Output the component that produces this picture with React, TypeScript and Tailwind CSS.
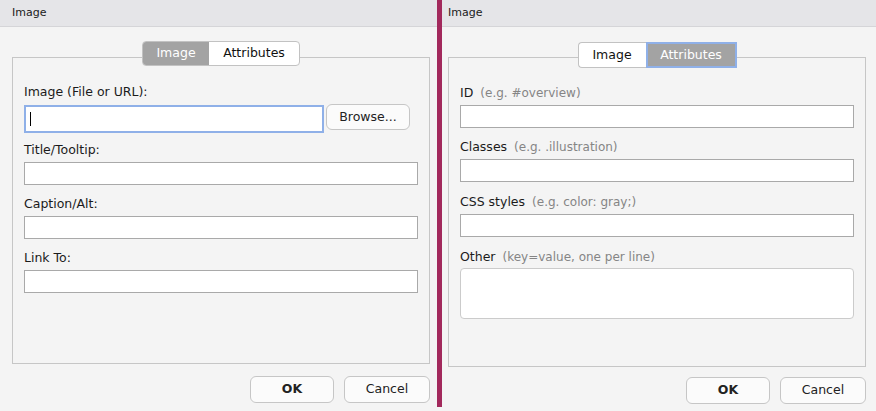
import React from "react";

const font = { fontFamily: '"DejaVu Sans", Verdana, sans-serif' };

function Label({ text, hint }: { text: string; hint?: string }) {
  return (
    <div className="h-[16px] flex items-center text-[12.5px] leading-[16px] text-[#1b1b1b] whitespace-nowrap">
      <span>{text}</span>
      {hint && <span className="ml-[7px] text-[12px] text-[#858585]">{hint}</span>}
    </div>
  );
}

function Input() {
  return <div className="mt-[4px] h-[23px] w-full border border-[#a9a9a9] bg-white" />;
}

function Tabs({ active }: { active: "image" | "attrs" }) {
  return (
    <div className="relative z-10 flex justify-center">
      {active === "image" ? (
        <div className="flex h-[25px] rounded-[4px] border border-[#c2c2c2] bg-white overflow-hidden text-[12.5px]">
          <div className="w-[66px] flex items-center justify-center bg-[#a3a3a3] text-white">Image</div>
          <div className="w-[90px] flex items-center justify-center text-[#111]">Attributes</div>
        </div>
      ) : (
        <div className="flex h-[26px] mt-[1px] text-[12.5px]">
          <div className="w-[68px] flex items-center justify-center bg-white border border-[#c2c2c2] border-r-0 rounded-l-[4px] text-[#111]">
            Image
          </div>
          <div className="w-[91px] flex items-center justify-center bg-[#a3a3a3] border-2 border-[#8fb0e8] text-white">
            Attributes
          </div>
        </div>
      )}
    </div>
  );
}

function Buttons() {
  return (
    <div className="flex justify-end gap-[10px]">
      <div className="w-[84px] h-[27px] flex items-center justify-center rounded-[6px] border border-[#c6c6c6] bg-[#fbfbfb] text-[12.5px] font-bold text-[#222]">
        OK
      </div>
      <div className="w-[86px] h-[27px] flex items-center justify-center rounded-[6px] border border-[#c6c6c6] bg-[#fbfbfb] text-[12.5px] text-[#222]">
        Cancel
      </div>
    </div>
  );
}

function TitleBar() {
  return (
    <div className="h-[27px] flex items-center pl-[12px] bg-[#e5e5e8] border-b border-[#d5d5d8] text-[11px] text-[#1b1b1b]">
      Image
    </div>
  );
}

function LeftPanel() {
  return (
    <div className="w-[436px] shrink-0 h-full bg-[#f4f4f4] overflow-hidden">
      <TitleBar />
      <div className="ml-[12px] w-[418px] mt-[14px]">
        <Tabs active="image" />
        <div className="-mt-[9px] h-[307px] border border-[#c6c6c6] px-[11px] pt-[26px]">
          <Label text="Image (File or URL):" />
          <div className="mt-[5px] flex items-start gap-[2px]">
            <div className="h-[28px] w-[300px] border-2 border-[#8fb0e8] bg-white flex items-center">
              <span className="ml-[4px] w-px h-[14px] bg-black" />
            </div>
            <div className="-mt-[1px] h-[26px] w-[84px] flex items-center justify-center rounded-[6px] border border-[#c6c6c6] bg-[#fbfbfb] text-[12.5px] text-[#222]">
              Browse...
            </div>
          </div>
          <div className="mt-[9px]">
            <Label text="Title/Tooltip:" />
            <Input />
          </div>
          <div className="mt-[11px]">
            <Label text="Caption/Alt:" />
            <Input />
          </div>
          <div className="mt-[11px]">
            <Label text="Link To:" />
            <Input />
          </div>
        </div>
        <div className="mt-[12px]">
          <Buttons />
        </div>
      </div>
    </div>
  );
}

function RightPanel() {
  return (
    <div className="w-[440px] shrink-0 h-full bg-[#f4f4f4] overflow-hidden">
      <TitleBar />
      <div className="ml-[12px] w-[418px] mt-[14px]">
        <Tabs active="attrs" />
        <div className="-mt-[11px] h-[310px] border border-[#c6c6c6] px-[11px] pt-[27px]">
          <Label text="ID" hint="(e.g. #overview)" />
          <Input />
          <div className="mt-[11px]">
            <Label text="Classes" hint="(e.g. .illustration)" />
            <Input />
          </div>
          <div className="mt-[12px]">
            <Label text="CSS styles" hint="(e.g. color: gray;)" />
            <Input />
          </div>
          <div className="mt-[12px]">
            <Label text="Other" hint="(key=value, one per line)" />
            <div className="mt-[3px] h-[51px] w-full rounded-[4px] border border-[#cbcbcb] bg-white" />
          </div>
        </div>
        <div className="mt-[10px]">
          <Buttons />
        </div>
      </div>
    </div>
  );
}

export default function App() {
  return (
    <div className="relative w-[876px] h-[411px] flex bg-[#f4f4f4] overflow-hidden" style={font}>
      <LeftPanel />
      <RightPanel />
      <div className="absolute left-[437px] top-0 w-[5px] h-[407px] bg-[#a2295c]" />
    </div>
  );
}
